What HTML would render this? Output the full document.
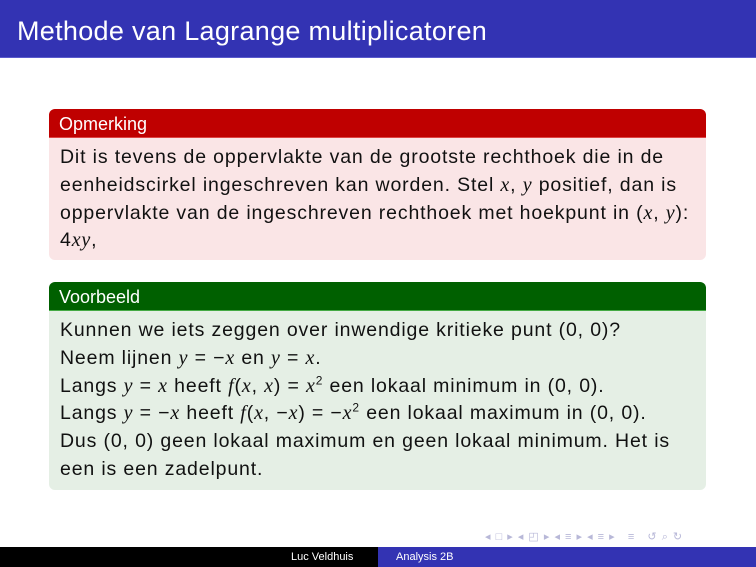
<!DOCTYPE html>
<html><head><meta charset="utf-8"><style>
body{margin:0;width:756px;height:567px;position:relative;background:#fff;font-family:"Liberation Sans",sans-serif;overflow:hidden}
.hdr{position:absolute;left:0;top:0;width:756px;height:57px;background:#3333b3;border-bottom:1px solid #5a5acc}
.hdr span{position:absolute;left:17px;top:16px;color:#fff;font-size:27px;letter-spacing:0.3px;white-space:nowrap}
.box{position:absolute;left:49px;width:657px;border-radius:6px;overflow:hidden}
.bt{height:28px;color:#fff;font-size:18px;line-height:30px;padding-left:10px}
.bb{padding:6px 0 0 11px;font-size:19.5px;line-height:27.8px;color:#111;letter-spacing:0.85px;white-space:nowrap}
i{font-family:"Liberation Serif",serif;font-size:20px}
sup{font-size:12px;line-height:0}
.ft{position:absolute;top:547px;height:20px;font-size:11px;line-height:20px;color:#fff}
.nav{position:absolute;top:530px;left:485px;font-size:11px;color:#b8b8d8;letter-spacing:1px}
</style></head><body>
<div class="hdr"><span>Methode van Lagrange multiplicatoren</span></div>
<div class="box" style="top:109px;height:151px;background:#fae5e6">
<div class="bt" style="background:#bf0000;border-bottom:1px solid #d44">Opmerking</div>
<div class="bb">Dit is tevens de oppervlakte van de grootste rechthoek die in de<br>eenheidscirkel ingeschreven kan worden. Stel <i>x</i>, <i>y</i> positief, dan is<br>oppervlakte van de ingeschreven rechthoek met hoekpunt in (<i>x</i>, <i>y</i>):<br>4<i>xy</i>,</div>
</div>
<div class="box" style="top:282px;height:208px;background:#e5efe5">
<div class="bt" style="background:#006000;border-bottom:1px solid #4a4">Voorbeeld</div>
<div class="bb">Kunnen we iets zeggen over inwendige kritieke punt (0, 0)?<br>Neem lijnen <i>y</i> = −<i>x</i> en <i>y</i> = <i>x</i>.<br>Langs <i>y</i> = <i>x</i> heeft <i>f</i>(<i>x</i>, <i>x</i>) = <i>x</i><sup>2</sup> een lokaal minimum in (0, 0).<br>Langs <i>y</i> = −<i>x</i> heeft <i>f</i>(<i>x</i>, −<i>x</i>) = −<i>x</i><sup>2</sup> een lokaal maximum in (0, 0).<br>Dus (0, 0) geen lokaal maximum en geen lokaal minimum. Het is<br>een is een zadelpunt.</div>
</div>
<div class="nav">◂ □ ▸ ◂ ◰ ▸ ◂ ≡ ▸ ◂ ≡ ▸ &nbsp; ≡ &nbsp; ↺ ⌕ ↻</div>
<div class="ft" style="left:0;width:378px;background:#000"><span style="position:absolute;left:291px">Luc Veldhuis</span></div>
<div class="ft" style="left:378px;width:378px;background:#3333b3"><span style="position:absolute;left:18px">Analysis 2B</span></div>
</body></html>
